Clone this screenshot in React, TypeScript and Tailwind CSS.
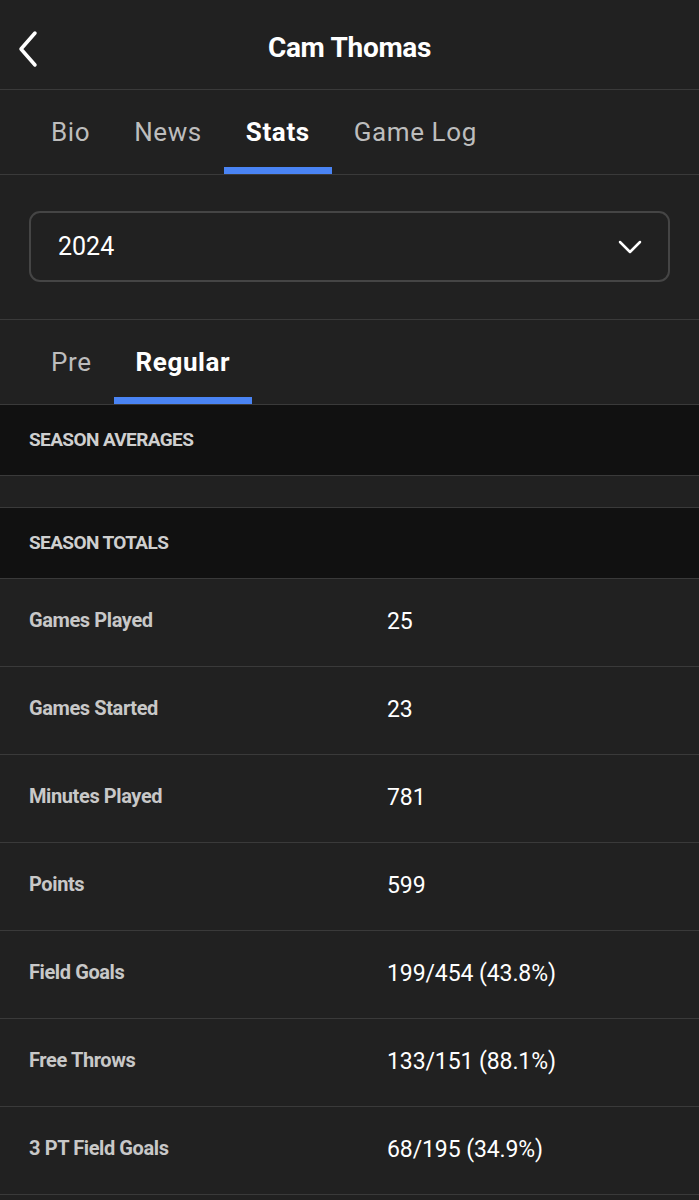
import React, { useState } from "react";

const font = {
  fontFamily: 'Roboto, "DejaVu Sans Condensed", sans-serif',
};

const stats = [
  { label: "Games Played", value: "25" },
  { label: "Games Started", value: "23" },
  { label: "Minutes Played", value: "781" },
  { label: "Points", value: "599" },
  { label: "Field Goals", value: "199/454 (43.8%)" },
  { label: "Free Throws", value: "133/151 (88.1%)" },
  { label: "3 PT Field Goals", value: "68/195 (34.9%)" },
];

function Tabs({
  items,
  active,
  onChange,
}: {
  items: string[];
  active: string;
  onChange: (t: string) => void;
}) {
  return (
    <div className="flex h-[85px] border-b border-[#3a3a3a] px-[29px]">
      {items.map((t) => (
        <button
          key={t}
          onClick={() => onChange(t)}
          className={`relative flex items-center px-[22px] text-[26px] tracking-[0.6px] ${
            active === t ? "font-bold text-white" : "text-[#bdbdbd]"
          }`}
        >
          {t}
          {active === t && (
            <span className="absolute bottom-0 left-0 right-0 h-[7px] bg-[#4a84f4]" />
          )}
        </button>
      ))}
    </div>
  );
}

export default function App() {
  const [tab, setTab] = useState("Stats");
  const [season, setSeason] = useState("Regular");

  return (
    <div className="min-h-[1200px] w-full bg-[#212121] text-white" style={font}>
      {/* top bar */}
      <div className="relative flex h-[90px] items-center justify-center border-b border-[#3a3a3a] pt-[6px]">
        <button className="absolute left-[11px] top-[25px] p-1">
          <svg width="26" height="40" viewBox="0 0 26 40" fill="none">
            <path
              d="M20 4 L6 20 L20 36"
              stroke="white"
              strokeWidth="3.5"
              strokeLinecap="round"
              strokeLinejoin="round"
            />
          </svg>
        </button>
        <h1 className="text-[28px] font-bold tracking-[-0.3px]">Cam Thomas</h1>
      </div>

      <Tabs items={["Bio", "News", "Stats", "Game Log"]} active={tab} onChange={setTab} />

      {/* season select */}
      <div className="border-b border-[#3a3a3a] px-[29px] pb-[37px] pt-[36px]">
        <div className="flex h-[71px] items-center justify-between rounded-[11px] border-2 border-[#454545] pl-[27px] pr-[26px]">
          <span className="text-[25px]">2024</span>
          <svg width="24" height="14" viewBox="0 0 24 14" fill="none">
            <path
              d="M2 2 L12 12 L22 2"
              stroke="white"
              strokeWidth="2.5"
              strokeLinecap="round"
              strokeLinejoin="round"
            />
          </svg>
        </div>
      </div>

      <Tabs items={["Pre", "Regular"]} active={season} onChange={setSeason} />

      <div className="flex h-[71px] items-center border-b border-[#3a3a3a] bg-[#111111] px-[29px]">
        <span className="text-[19px] font-bold uppercase tracking-[-0.6px] text-[#cfcfcf]">Season Averages</span>
      </div>
      <div className="h-[32px] border-b border-[#3a3a3a]" />

      <div className="flex h-[71px] items-center border-b border-[#3a3a3a] bg-[#111111] px-[29px]">
        <span className="text-[19px] font-bold uppercase tracking-[-0.6px] text-[#cfcfcf]">Season Totals</span>
      </div>

      {stats.map((s) => (
        <div key={s.label} className="flex h-[88px] items-center border-b border-[#3a3a3a] px-[29px]">
          <span className="w-[358px] pb-[5px] text-[20px] font-bold tracking-[-0.4px] text-[#c8c8c8]">{s.label}</span>
          <span className="text-[23px] tracking-[-0.1px] text-white">{s.value}</span>
        </div>
      ))}
    </div>
  );
}
